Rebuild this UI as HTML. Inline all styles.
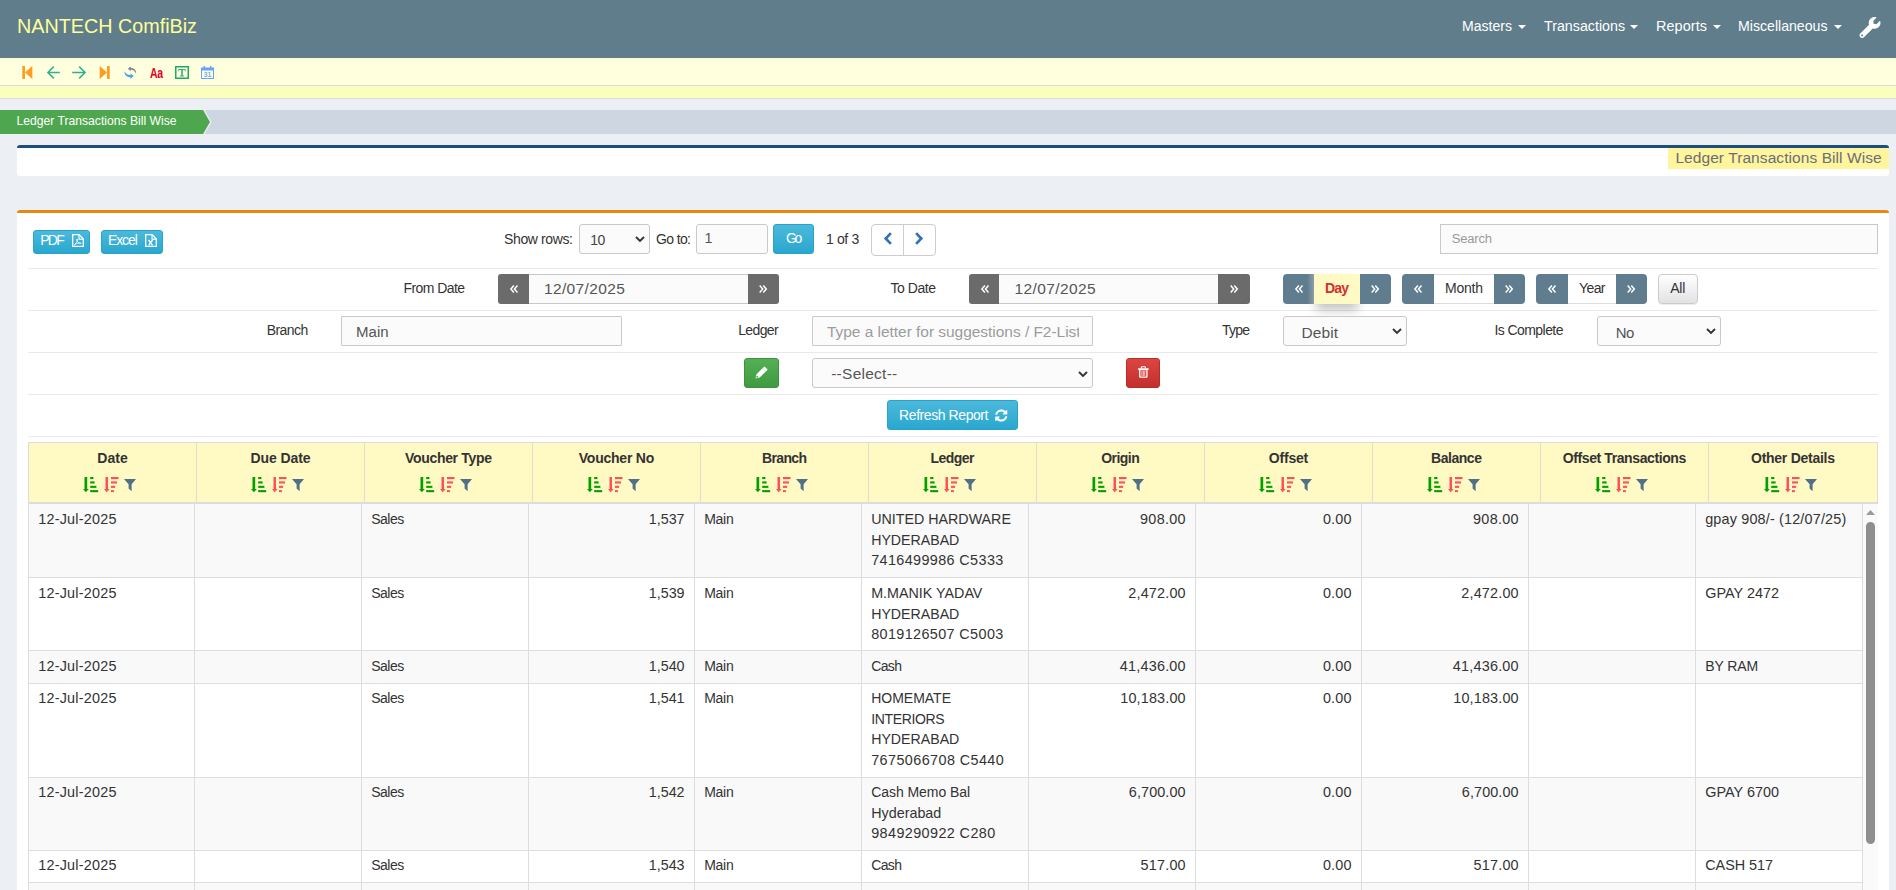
<!DOCTYPE html><html><head><meta charset="utf-8"><title>Ledger Transactions Bill Wise</title><style>
*{box-sizing:border-box}
html,body{margin:0;padding:0}
body{width:1896px;height:890px;overflow:hidden;position:relative;background:#ECEFF4;font-family:'Liberation Sans',sans-serif;font-size:14.4px;color:#333}
.t{position:absolute;white-space:pre;line-height:20px}
.abs{position:absolute}
svg{position:absolute;overflow:visible}
.inp{position:absolute;background:#FBFBFB;border:1px solid #C9C9C9;border-radius:1px}
.sep{position:absolute;left:28px;width:1850px;height:1px;background:#E9E9E9}
.bi{position:absolute;border-radius:3px;border:1px solid #28A4C9;background:linear-gradient(#4BB9DC,#2AA7CF)}
.dk{position:absolute;background:#6B6B6B}
.bg{position:absolute;background:#5F7D8E}
</style></head><body><div style="position:absolute;left:0px;top:0px;width:1896px;height:58px;background:#607D8B"></div><span class="t" style="left:17.00px;top:16.00px;font-size:19.75px;color:#FFFF99;">NANTECH ComfiBiz</span><span class="t" style="left:1462.00px;top:16.00px;font-size:14.07px;color:#fff;">Masters</span><svg style="left:1518px;top:25px" width="8" height="4" viewBox="0 0 8 4" ><polygon points="0,0 8,0 4,4" fill="#fff"/></svg><span class="t" style="left:1544.00px;top:16.00px;font-size:14.25px;color:#fff;">Transactions</span><svg style="left:1630px;top:25px" width="8" height="4" viewBox="0 0 8 4" ><polygon points="0,0 8,0 4,4" fill="#fff"/></svg><span class="t" style="left:1656.00px;top:16.00px;font-size:14.4px;color:#fff;letter-spacing:0.102px;">Reports</span><svg style="left:1713px;top:25px" width="8" height="4" viewBox="0 0 8 4" ><polygon points="0,0 8,0 4,4" fill="#fff"/></svg><span class="t" style="left:1738.00px;top:16.00px;font-size:14.13px;color:#fff;">Miscellaneous</span><svg style="left:1833.5px;top:25px" width="8" height="4" viewBox="0 0 8 4" ><polygon points="0,0 8,0 4,4" fill="#fff"/></svg><svg style="left:1859px;top:17px" width="22" height="21" viewBox="0 0 512 512" ><path d="M507.73 109.1c-2.24-9.03-13.54-12.09-20.12-5.51l-74.36 74.36-67.88-11.31-11.31-67.88 74.36-74.36c6.62-6.62 3.43-17.9-5.66-20.16-47.38-11.74-99.55.91-136.58 37.93-39.64 39.64-50.55 97.1-34.05 147.2L18.74 402.76c-24.99 24.99-24.99 65.51 0 90.5 24.99 24.99 65.51 24.99 90.5 0l213.21-213.21c50.12 16.71 107.47 5.68 147.37-34.22 37.07-37.07 49.7-89.32 37.91-136.73zM64 472c-13.25 0-24-10.75-24-24 0-13.26 10.75-24 24-24s24 10.74 24 24c0 13.25-10.75 24-24 24z" fill="#fff"/></svg><div style="position:absolute;left:0px;top:58px;width:1896px;height:27px;background:linear-gradient(#F6F8D8 0,#FFFFDE 4px,#FFFFDE 100%)"></div><div style="position:absolute;left:0px;top:85px;width:1896px;height:1px;background:#DCDCD4"></div><div style="position:absolute;left:0px;top:86px;width:1896px;height:12px;background:#FAFEBE"></div><div style="position:absolute;left:0px;top:98px;width:1896px;height:1px;background:#DDDDD8"></div><svg style="left:22px;top:66px" width="11" height="13" viewBox="0 0 11 13" ><rect x="0.3" y="0" width="2.7" height="13" fill="#FF9A22"/><polygon points="10.3,0 10.3,13 3,6.5" fill="#FF9A22"/></svg><svg style="left:47px;top:66px" width="13" height="13" viewBox="0 0 13 13" ><path d="M12.8 6.5H1M6.8 0.6L0.9 6.5l5.9 5.9" fill="none" stroke="#2FAF93" stroke-width="1.5"/></svg><svg style="left:72px;top:66px" width="14" height="13" viewBox="0 0 14 13" ><path d="M0.2 6.5H13M7.2 0.6l5.9 5.9l-5.9 5.9" fill="none" stroke="#2FAF93" stroke-width="1.5"/></svg><svg style="left:99px;top:66px" width="11" height="13" viewBox="0 0 11 13" ><rect x="8" y="0" width="2.7" height="13" fill="#FF9A22"/><polygon points="0.7,0 0.7,13 8,6.5" fill="#FF9A22"/></svg><svg style="left:123.5px;top:65.5px" width="14" height="14" viewBox="0 0 14 14" ><path d="M6.2 0.4L3.9 3l3 1.9 0-1.4c2.6 0.3 4.3 1.9 5.2 4.6 0.4-3.6-1.7-6.1-5.2-6.3z" fill="#7D8896"/><path d="M0.5 5.2c-0.3 3.6 2.2 6 5.9 6.1l0 1.8 3.4-3-3.4-2.6 0 1.6C3.6 8.9 1.600 7.6 0.5 5.2z" fill="#4EA4F0"/></svg><span class="t" style="left:149.8px;top:62.8px;font-size:14.6px;font-weight:700;color:#E0002A;transform:scaleX(0.72);transform-origin:0 0;letter-spacing:-0.3px">Aa</span><svg style="left:175px;top:66px" width="14" height="13" viewBox="0 0 14 13" ><rect x="0.75" y="0.75" width="12.5" height="11.5" fill="none" stroke="#1FA866" stroke-width="1.5"/><path d="M3.3 3h7.4v2.2h-0.9v-1.1H7.8v5.3h1.3v1H4.9v-1h1.3V4.100H4.200v1.100H3.300z" fill="#36AE78"/></svg><svg style="left:201px;top:66px" width="13" height="13" viewBox="0 0 13 13" ><rect x="0.5" y="2.200" width="12" height="10.3" fill="none" stroke="#66A3FF" stroke-width="1"/><rect x="0" y="1.700" width="13" height="2.800" fill="#66A3FF"/><rect x="2.600" y="0" width="1.500" height="2.600" fill="#66A3FF"/><rect x="8.900" y="0" width="1.500" height="2.600" fill="#66A3FF"/><text x="6.500" y="11" font-size="6.800" font-weight="700" fill="#6FA8FF" text-anchor="middle" font-family="Liberation Sans">31</text></svg><div style="position:absolute;left:0px;top:110px;width:1896px;height:24px;background:#CED6E2"></div><svg style="left:0px;top:110px" width="214" height="24" viewBox="0 0 214 24" ><polygon points="0,0 203,0 210,12 203,24 0,24" fill="#4EA74E"/><path d="M203.8 -0.5L210.900 12 203.800 24.500" fill="none" stroke="#E9EEF0" stroke-width="1.200"/></svg><span class="t" style="left:16.50px;top:111.00px;font-size:12.16px;color:#fff;letter-spacing:-0.005px;">Ledger Transactions Bill Wise</span><div style="position:absolute;left:17px;top:145px;width:1872px;height:31px;background:#fff;border-top:3px solid #1E4D80;border-radius:3px"></div><div style="position:absolute;left:1668px;top:148px;width:221px;height:21px;background:#FFF59D"></div><span class="t" style="left:1675.40px;top:148.00px;font-size:15.5px;color:#6A6E78;letter-spacing:0.076px;">Ledger Transactions Bill Wise</span><div style="position:absolute;left:17px;top:210px;width:1872px;height:700px;background:#fff;border-top:3px solid #E68A0F;border-radius:3px"></div><div class="sep" style="top:268px"></div><div class="sep" style="top:310px"></div><div class="sep" style="top:352px"></div><div class="sep" style="top:394px"></div><div class="sep" style="top:436px"></div><div class="bi" style="left:33px;top:230px;width:57px;height:24px"></div><span class="t" style="left:40.30px;top:230.00px;font-size:14.0px;color:#fff;letter-spacing:-1.800px;">PDF</span><svg style="left:72px;top:234px" width="12" height="13" viewBox="0 0 12 13" ><path d="M0.700 0.700h6.400l4.200 4.200v7.400h-10.600z" fill="none" stroke="#fff" stroke-width="1.300"/><path d="M7 0.900v4.200h4.200" fill="none" stroke="#fff" stroke-width="1.100"/><path d="M2.400 10.800c1.500-0.800 2.700-3 3-5.300 0.100-0.900-0.800-0.900-0.700 0 0.300 2 1.700 3.600 3.900 4.100 0.900 0.200 0.800-0.700 0-0.700-2.100 0-4.500 0.800-6.200 1.900z" fill="none" stroke="#fff" stroke-width="0.800"/></svg><div class="bi" style="left:101px;top:230px;width:62px;height:24px"></div><span class="t" style="left:107.90px;top:230.00px;font-size:14.0px;color:#fff;letter-spacing:-1.084px;">Excel</span><svg style="left:145px;top:234px" width="12" height="13" viewBox="0 0 12 13" ><path d="M0.700 0.700h6.400l4.200 4.200v7.400h-10.600z" fill="none" stroke="#fff" stroke-width="1.300"/><path d="M7 0.900v4.200h4.200" fill="none" stroke="#fff" stroke-width="1.100"/><path d="M3.600 6l4 5.300M7.600 6l-4 5.300" fill="none" stroke="#fff" stroke-width="1.400"/></svg><span class="t" style="left:504.00px;top:229.00px;font-size:14.0px;color:#333;letter-spacing:-0.373px;">Show rows:</span><div class="inp" style="left:579px;top:224px;width:71px;height:30px;border-radius:3px"></div><span class="t" style="left:590.20px;top:230.00px;font-size:14.0px;color:#444;letter-spacing:-0.578px;">10</span><svg style="left:634.5px;top:235.5px" width="10" height="6" viewBox="0 0 10 6" ><path d="M1 1l4 4 4-4" fill="none" stroke="#333" stroke-width="1.9"/></svg><span class="t" style="left:656.00px;top:229.00px;font-size:14.0px;color:#333;letter-spacing:-0.628px;">Go to:</span><div class="inp" style="left:696px;top:224px;width:72px;height:30px;border-radius:3px"></div><span class="t" style="left:704.50px;top:228.00px;font-size:14.4px;color:#555;">1</span><div class="bi" style="left:773px;top:224px;width:41px;height:30px"></div><span class="t" style="left:786.00px;top:228.00px;font-size:14.0px;color:#fff;letter-spacing:-2.488px;">Go</span><span class="t" style="left:826.00px;top:229.00px;font-size:14.0px;color:#333;letter-spacing:-0.366px;">1 of 3</span><div style="position:absolute;left:871px;top:224px;width:65px;height:32px;background:#fff;border:1px solid #CDCDCD;border-radius:4px"></div><div style="position:absolute;left:903px;top:224px;width:1px;height:32px;background:#CDCDCD"></div><svg style="left:884px;top:232.4px" width="8" height="13" viewBox="0 0 8 13" ><path d="M6.900 1.100L1.700 6.500l5.200 5.400" fill="none" stroke="#2F73B5" stroke-width="2.700"/></svg><svg style="left:915.3px;top:232.4px" width="8" height="13" viewBox="0 0 8 13" ><path d="M1.100 1.100L6.300 6.500l-5.200 5.400" fill="none" stroke="#2F73B5" stroke-width="2.700"/></svg><div class="inp" style="left:1440px;top:224px;width:438px;height:30px;border-radius:0"></div><span class="t" style="left:1451.80px;top:229.00px;font-size:13.03px;color:#999;letter-spacing:-0.210px;">Search</span><span class="t" style="left:403.40px;top:278.00px;font-size:14.0px;color:#333;letter-spacing:-0.553px;">From Date</span><div class="inp" style="left:527px;top:274px;width:223px;height:30px;border-radius:0;border-color:#C8C8C8"></div><div class="dk" style="left:498px;top:274px;width:31px;height:30px;border-radius:3px 0 0 3px"></div><div class="dk" style="left:748px;top:274px;width:31px;height:30px;border-radius:0 3px 3px 0"></div><svg style="left:510.0px;top:284.9px" width="8.2" height="8.0" viewBox="0 0 8.2 8" ><path d="M3.900 0.600L0.900 4l3 3.400M7.500 0.600L4.500 4l3 3.400" fill="none" stroke="#fff" stroke-width="1.500"/></svg><svg style="left:759.1999999999999px;top:284.9px" width="8.2" height="8.0" viewBox="0 0 8.2 8" ><path d="M0.700 0.600L3.700 4l-3 3.400M4.300 0.600L7.300 4l-3 3.400" fill="none" stroke="#fff" stroke-width="1.500"/></svg><span class="t" style="left:543.90px;top:279.00px;font-size:15.5px;color:#555;letter-spacing:0.380px;">12/07/2025</span><span class="t" style="left:890.60px;top:278.00px;font-size:14.0px;color:#333;letter-spacing:-0.475px;">To Date</span><div class="inp" style="left:997px;top:274px;width:223px;height:30px;border-radius:0;border-color:#C8C8C8"></div><div class="dk" style="left:969px;top:274px;width:30px;height:30px;border-radius:3px 0 0 3px"></div><div class="dk" style="left:1218px;top:274px;width:32px;height:30px;border-radius:0 3px 3px 0"></div><svg style="left:980.5px;top:284.9px" width="8.2" height="8.0" viewBox="0 0 8.2 8" ><path d="M3.900 0.600L0.900 4l3 3.400M7.500 0.600L4.500 4l3 3.400" fill="none" stroke="#fff" stroke-width="1.500"/></svg><svg style="left:1229.7px;top:284.9px" width="8.2" height="8.0" viewBox="0 0 8.2 8" ><path d="M0.700 0.600L3.700 4l-3 3.400M4.300 0.600L7.300 4l-3 3.400" fill="none" stroke="#fff" stroke-width="1.500"/></svg><span class="t" style="left:1014.60px;top:279.00px;font-size:15.5px;color:#555;letter-spacing:0.380px;">12/07/2025</span><div class="bg" style="left:1283px;top:274px;width:31px;height:30px;border-radius:4px 0 0 4px"></div><div style="position:absolute;left:1314px;top:274px;width:46px;height:30px;background:#FFF9C4;box-shadow:0 8px 11px -2px rgba(0,0,0,0.24)"></div><div style="position:absolute;left:1307px;top:274px;width:7px;height:30px;background:linear-gradient(to right,rgba(150,165,178,0),rgba(150,165,178,0.85))"></div><div class="bg" style="left:1360px;top:274px;width:31px;height:30px;border-radius:0 4px 4px 0"></div><svg style="left:1294.8000000000002px;top:284.8px" width="8.2" height="8.0" viewBox="0 0 8.2 8" ><path d="M3.900 0.600L0.900 4l3 3.400M7.500 0.600L4.500 4l3 3.400" fill="none" stroke="#fff" stroke-width="1.500"/></svg><svg style="left:1371.2px;top:284.8px" width="8.2" height="8.0" viewBox="0 0 8.2 8" ><path d="M0.700 0.600L3.700 4l-3 3.400M4.300 0.600L7.300 4l-3 3.400" fill="none" stroke="#fff" stroke-width="1.500"/></svg><span class="t" style="left:1325.00px;top:278.00px;font-size:14.0px;color:#D32F2F;font-weight:700;letter-spacing:-0.844px;">Day</span><div class="bg" style="left:1402px;top:274px;width:32px;height:30px;border-radius:4px 0 0 4px"></div><div style="position:absolute;left:1434px;top:274px;width:60px;height:30px;background:#fff;border-top:1px solid #DDD;border-bottom:1px solid #DDD"></div><div class="bg" style="left:1494px;top:274px;width:31px;height:30px;border-radius:0 4px 4px 0"></div><svg style="left:1414.3000000000002px;top:284.8px" width="8.2" height="8.0" viewBox="0 0 8.2 8" ><path d="M3.900 0.600L0.900 4l3 3.400M7.500 0.600L4.500 4l3 3.400" fill="none" stroke="#fff" stroke-width="1.500"/></svg><svg style="left:1505.2px;top:284.8px" width="8.2" height="8.0" viewBox="0 0 8.2 8" ><path d="M0.700 0.600L3.700 4l-3 3.400M4.300 0.600L7.300 4l-3 3.400" fill="none" stroke="#fff" stroke-width="1.500"/></svg><span class="t" style="left:1445.00px;top:278.00px;font-size:14.0px;color:#333;letter-spacing:-0.230px;">Month</span><div class="bg" style="left:1536px;top:274px;width:32px;height:30px;border-radius:4px 0 0 4px"></div><div style="position:absolute;left:1568px;top:274px;width:48px;height:30px;background:#fff;border-top:1px solid #DDD;border-bottom:1px solid #DDD"></div><div class="bg" style="left:1616px;top:274px;width:31px;height:30px;border-radius:0 4px 4px 0"></div><svg style="left:1548.3000000000002px;top:284.8px" width="8.2" height="8.0" viewBox="0 0 8.2 8" ><path d="M3.900 0.600L0.900 4l3 3.400M7.500 0.600L4.500 4l3 3.400" fill="none" stroke="#fff" stroke-width="1.500"/></svg><svg style="left:1627.2px;top:284.8px" width="8.2" height="8.0" viewBox="0 0 8.2 8" ><path d="M0.700 0.600L3.700 4l-3 3.400M4.300 0.600L7.300 4l-3 3.400" fill="none" stroke="#fff" stroke-width="1.500"/></svg><span class="t" style="left:1579.00px;top:278.00px;font-size:14.0px;color:#333;letter-spacing:-0.599px;">Year</span><div style="position:absolute;left:1658px;top:274px;width:39.5px;height:30px;background:linear-gradient(#fff,#E2E2E2);border:1px solid #CCC;border-radius:4px;box-shadow:0 1px 1px rgba(0,0,0,0.08)"></div><span class="t" style="left:1670.30px;top:278.00px;font-size:14.0px;color:#333;letter-spacing:-0.281px;">All</span><span class="t" style="left:266.70px;top:320.00px;font-size:14.0px;color:#333;letter-spacing:-0.572px;">Branch</span><div class="inp" style="left:341px;top:316px;width:281px;height:30px"></div><span class="t" style="left:356.10px;top:322.00px;font-size:15.03px;color:#555;letter-spacing:0.018px;">Main</span><span class="t" style="left:738.20px;top:320.00px;font-size:14.0px;color:#333;letter-spacing:-0.619px;">Ledger</span><div class="inp" style="left:812px;top:316px;width:281px;height:30px"></div><div style="position:absolute;left:826px;top:318px;width:253px;height:26px;overflow:hidden"><span class="t" style="left:1px;top:4px;font-size:15.5px;color:#9C9C9C;letter-spacing:-0.038px">Type a letter for suggestions / F2-List</span></div><span class="t" style="left:1222.00px;top:320.00px;font-size:14.0px;color:#333;letter-spacing:-0.786px;">Type</span><div class="inp" style="left:1283px;top:316px;width:124px;height:30px;border-radius:3px"></div><span class="t" style="left:1301.50px;top:323.00px;font-size:15.5px;color:#555;letter-spacing:0.078px;">Debit</span><svg style="left:1392px;top:328px" width="10" height="6" viewBox="0 0 10 6" ><path d="M1 1l4 4 4-4" fill="none" stroke="#333" stroke-width="1.9"/></svg><span class="t" style="left:1494.40px;top:320.00px;font-size:14.0px;color:#333;letter-spacing:-0.560px;">Is Complete</span><div class="inp" style="left:1597px;top:316px;width:124px;height:30px;border-radius:3px"></div><span class="t" style="left:1615.70px;top:323.00px;font-size:14.96px;color:#555;letter-spacing:-0.425px;">No</span><svg style="left:1705.5px;top:328px" width="10" height="6" viewBox="0 0 10 6" ><path d="M1 1l4 4 4-4" fill="none" stroke="#333" stroke-width="1.9"/></svg><div style="position:absolute;left:744px;top:358px;width:35px;height:30px;background:linear-gradient(#55B055,#3F9B3F);border:1px solid #3E8F3E;border-radius:3px"></div><svg style="left:754.7px;top:366px" width="13" height="13" viewBox="0 0 13 13" ><g transform="rotate(45 6.500 6.500)"><rect x="4.200" y="0" width="4.600" height="11.400" rx="0.500" fill="#fff"/><polygon points="4.200,11.300 8.800,11.300 6.500,15" fill="#fff"/><rect x="4.200" y="2.300" width="4.600" height="0.500" fill="#8CCB8C"/><circle cx="6.500" cy="12.700" r="0.750" fill="#3F7F5F"/></g></svg><div class="inp" style="left:812px;top:358px;width:281px;height:30px;border-radius:3px"></div><span class="t" style="left:831.20px;top:364.00px;font-size:15.5px;color:#555;letter-spacing:0.263px;">--Select--</span><svg style="left:1078px;top:370.5px" width="10" height="6" viewBox="0 0 10 6" ><path d="M1 1l4 4 4-4" fill="none" stroke="#333" stroke-width="1.9"/></svg><div style="position:absolute;left:1126px;top:358px;width:34px;height:30px;background:linear-gradient(#DA4743,#C3302C);border:1px solid #B92C28;border-radius:3px"></div><svg style="left:1137.7px;top:366.4px" width="10.7" height="11.7" viewBox="0 0 10.7 11.7" ><path d="M0 2.300h10.700v1.500H0z" fill="#fff"/><path d="M3.300 2.400v-0.900c0-0.500 0.300-0.800 0.800-0.800h2.500c0.500 0 0.800 0.300 0.800 0.800v0.900" fill="none" stroke="#fff" stroke-width="1.100"/><rect x="1.750" y="3.700" width="7.200" height="7.350" rx="0.600" fill="none" stroke="#fff" stroke-width="1.300"/><path d="M3.900 4.800v5.200M5.350 4.800v5.200M6.800 4.800v5.200" stroke="#FFEDE0" stroke-width="0.800"/></svg><div class="bi" style="left:887px;top:400px;width:131px;height:30px"></div><span class="t" style="left:899.10px;top:405.00px;font-size:14.0px;color:#fff;letter-spacing:-0.426px;">Refresh Report</span><svg style="left:994.8px;top:408.5px" width="12.5" height="13" viewBox="0 0 512 512" ><path d="M370.720 133.280C339.460 104.010 298.890 87.960 255.850 88c-77.460.070-144.330 53.180-162.790 126.850-1.340 5.360-6.120 9.150-11.650 9.150H24.100c-7.500 0-13.190-6.810-11.810-14.180C33.930 94.920 134.810 8 256 8c66.450 0 126.790 26.140 171.310 68.690L463.030 40.970C478.150 25.850 504 36.560 504 57.940V192c0 13.250-10.750 24-24 24H345.940c-21.380 0-32.090-25.850-16.970-40.970l41.750-41.750zM32 296h134.060c21.380 0 32.090 25.850 16.970 40.970l-41.750 41.750c31.260 29.270 71.840 45.320 114.880 45.280 77.420-.070 144.310-53.140 162.780-126.850 1.340-5.360 6.120-9.150 11.650-9.150h57.300c7.500 0 13.190 6.810 11.810 14.180C478.070 417.080 377.190 504 256 504c-66.450 0-126.790-26.140-171.310-68.690l-35.720 35.720C33.850 486.150 8 475.440 8 454.060V320c0-13.250 10.750-24 24-24z" fill="#fff"/></svg><div style="position:absolute;left:28px;top:442px;width:1850px;height:60px;background:#FFF9C4"></div><div style="position:absolute;left:28px;top:442px;width:1850px;height:1px;background:#DDD"></div><div style="position:absolute;left:28px;top:502px;width:1850px;height:2.5px;background:#DCDCDC"></div><div style="position:absolute;left:28px;top:442px;width:1px;height:60px;background:#DDDDD0"></div><div style="position:absolute;left:196px;top:442px;width:1px;height:60px;background:#DDDDD0"></div><div style="position:absolute;left:364px;top:442px;width:1px;height:60px;background:#DDDDD0"></div><div style="position:absolute;left:532px;top:442px;width:1px;height:60px;background:#DDDDD0"></div><div style="position:absolute;left:700px;top:442px;width:1px;height:60px;background:#DDDDD0"></div><div style="position:absolute;left:868px;top:442px;width:1px;height:60px;background:#DDDDD0"></div><div style="position:absolute;left:1036px;top:442px;width:1px;height:60px;background:#DDDDD0"></div><div style="position:absolute;left:1204px;top:442px;width:1px;height:60px;background:#DDDDD0"></div><div style="position:absolute;left:1372px;top:442px;width:1px;height:60px;background:#DDDDD0"></div><div style="position:absolute;left:1540px;top:442px;width:1px;height:60px;background:#DDDDD0"></div><div style="position:absolute;left:1708px;top:442px;width:1px;height:60px;background:#DDDDD0"></div><div style="position:absolute;left:1877px;top:442px;width:1px;height:60px;background:#DDDDD0"></div><span class="t" style="left:97.30px;top:448.00px;font-size:14.03px;color:#333;font-weight:700;">Date</span><svg style="left:83.0px;top:477px" width="16" height="15.5" viewBox="0 0 16 15.5" ><rect x="1.500" y="0" width="2.700" height="12.500" fill="#00A000"/><polygon points="0,12 5.800,12 2.900,15.300" fill="#00A000"/><rect x="7.200" y="0" width="3.200" height="2.100" fill="#00A000"/><rect x="7.200" y="4.400" width="4.400" height="2.100" fill="#00A000"/><rect x="7.200" y="8.800" width="6.200" height="2.100" fill="#00A000"/><rect x="7.200" y="13.100" width="8" height="2.100" fill="#00A000"/></svg><svg style="left:104.4px;top:477px" width="16" height="15.5" viewBox="0 0 16 15.5" ><rect x="1.500" y="0" width="2.500" height="12.500" fill="#FF4F5B"/><polygon points="0,12 5.600,12 2.800,15.300" fill="#FF4F5B"/><rect x="7" y="0" width="7.500" height="2.100" fill="#FF4F5B"/><rect x="7" y="4.400" width="6" height="2.100" fill="#FF4F5B"/><rect x="7" y="8.800" width="4.100" height="2.100" fill="#FF4F5B"/><rect x="7" y="13.100" width="2.900" height="2.100" fill="#FF4F5B"/></svg><svg style="left:124.4px;top:479px" width="12" height="12.5" viewBox="0 0 12 12.5" ><polygon points="0,0 12,0 7.600,5.200 7.600,12.300 4.600,9.600 4.600,5.200" fill="#4F6F8B"/></svg><span class="t" style="left:250.50px;top:448.00px;font-size:14.0px;color:#333;font-weight:700;letter-spacing:-0.098px;">Due Date</span><svg style="left:251.0px;top:477px" width="16" height="15.5" viewBox="0 0 16 15.5" ><rect x="1.500" y="0" width="2.700" height="12.500" fill="#00A000"/><polygon points="0,12 5.800,12 2.900,15.300" fill="#00A000"/><rect x="7.200" y="0" width="3.200" height="2.100" fill="#00A000"/><rect x="7.200" y="4.400" width="4.400" height="2.100" fill="#00A000"/><rect x="7.200" y="8.800" width="6.200" height="2.100" fill="#00A000"/><rect x="7.200" y="13.100" width="8" height="2.100" fill="#00A000"/></svg><svg style="left:272.4px;top:477px" width="16" height="15.5" viewBox="0 0 16 15.5" ><rect x="1.500" y="0" width="2.500" height="12.500" fill="#FF4F5B"/><polygon points="0,12 5.600,12 2.800,15.300" fill="#FF4F5B"/><rect x="7" y="0" width="7.500" height="2.100" fill="#FF4F5B"/><rect x="7" y="4.400" width="6" height="2.100" fill="#FF4F5B"/><rect x="7" y="8.800" width="4.100" height="2.100" fill="#FF4F5B"/><rect x="7" y="13.100" width="2.900" height="2.100" fill="#FF4F5B"/></svg><svg style="left:292.4px;top:479px" width="12" height="12.5" viewBox="0 0 12 12.5" ><polygon points="0,0 12,0 7.600,5.200 7.600,12.300 4.600,9.600 4.600,5.200" fill="#4F6F8B"/></svg><span class="t" style="left:405.00px;top:448.00px;font-size:14.0px;color:#333;font-weight:700;letter-spacing:-0.320px;">Voucher Type</span><svg style="left:419.0px;top:477px" width="16" height="15.5" viewBox="0 0 16 15.5" ><rect x="1.500" y="0" width="2.700" height="12.500" fill="#00A000"/><polygon points="0,12 5.800,12 2.900,15.300" fill="#00A000"/><rect x="7.200" y="0" width="3.200" height="2.100" fill="#00A000"/><rect x="7.200" y="4.400" width="4.400" height="2.100" fill="#00A000"/><rect x="7.200" y="8.800" width="6.200" height="2.100" fill="#00A000"/><rect x="7.200" y="13.100" width="8" height="2.100" fill="#00A000"/></svg><svg style="left:440.4px;top:477px" width="16" height="15.5" viewBox="0 0 16 15.5" ><rect x="1.500" y="0" width="2.500" height="12.500" fill="#FF4F5B"/><polygon points="0,12 5.600,12 2.800,15.300" fill="#FF4F5B"/><rect x="7" y="0" width="7.500" height="2.100" fill="#FF4F5B"/><rect x="7" y="4.400" width="6" height="2.100" fill="#FF4F5B"/><rect x="7" y="8.800" width="4.100" height="2.100" fill="#FF4F5B"/><rect x="7" y="13.100" width="2.900" height="2.100" fill="#FF4F5B"/></svg><svg style="left:460.4px;top:479px" width="12" height="12.5" viewBox="0 0 12 12.5" ><polygon points="0,0 12,0 7.600,5.200 7.600,12.300 4.600,9.600 4.600,5.200" fill="#4F6F8B"/></svg><span class="t" style="left:578.75px;top:448.00px;font-size:14.0px;color:#333;font-weight:700;letter-spacing:-0.226px;">Voucher No</span><svg style="left:587.0px;top:477px" width="16" height="15.5" viewBox="0 0 16 15.5" ><rect x="1.500" y="0" width="2.700" height="12.500" fill="#00A000"/><polygon points="0,12 5.800,12 2.900,15.300" fill="#00A000"/><rect x="7.200" y="0" width="3.200" height="2.100" fill="#00A000"/><rect x="7.200" y="4.400" width="4.400" height="2.100" fill="#00A000"/><rect x="7.200" y="8.800" width="6.200" height="2.100" fill="#00A000"/><rect x="7.200" y="13.100" width="8" height="2.100" fill="#00A000"/></svg><svg style="left:608.4px;top:477px" width="16" height="15.5" viewBox="0 0 16 15.5" ><rect x="1.500" y="0" width="2.500" height="12.500" fill="#FF4F5B"/><polygon points="0,12 5.600,12 2.800,15.300" fill="#FF4F5B"/><rect x="7" y="0" width="7.500" height="2.100" fill="#FF4F5B"/><rect x="7" y="4.400" width="6" height="2.100" fill="#FF4F5B"/><rect x="7" y="8.800" width="4.100" height="2.100" fill="#FF4F5B"/><rect x="7" y="13.100" width="2.900" height="2.100" fill="#FF4F5B"/></svg><svg style="left:628.4px;top:479px" width="12" height="12.5" viewBox="0 0 12 12.5" ><polygon points="0,0 12,0 7.600,5.200 7.600,12.300 4.600,9.600 4.600,5.200" fill="#4F6F8B"/></svg><span class="t" style="left:762.00px;top:448.00px;font-size:14.0px;color:#333;font-weight:700;letter-spacing:-0.647px;">Branch</span><svg style="left:755.0px;top:477px" width="16" height="15.5" viewBox="0 0 16 15.5" ><rect x="1.500" y="0" width="2.700" height="12.500" fill="#00A000"/><polygon points="0,12 5.800,12 2.900,15.300" fill="#00A000"/><rect x="7.200" y="0" width="3.200" height="2.100" fill="#00A000"/><rect x="7.200" y="4.400" width="4.400" height="2.100" fill="#00A000"/><rect x="7.200" y="8.800" width="6.200" height="2.100" fill="#00A000"/><rect x="7.200" y="13.100" width="8" height="2.100" fill="#00A000"/></svg><svg style="left:776.4px;top:477px" width="16" height="15.5" viewBox="0 0 16 15.5" ><rect x="1.500" y="0" width="2.500" height="12.500" fill="#FF4F5B"/><polygon points="0,12 5.600,12 2.800,15.300" fill="#FF4F5B"/><rect x="7" y="0" width="7.500" height="2.100" fill="#FF4F5B"/><rect x="7" y="4.400" width="6" height="2.100" fill="#FF4F5B"/><rect x="7" y="8.800" width="4.100" height="2.100" fill="#FF4F5B"/><rect x="7" y="13.100" width="2.900" height="2.100" fill="#FF4F5B"/></svg><svg style="left:796.4px;top:479px" width="12" height="12.5" viewBox="0 0 12 12.5" ><polygon points="0,0 12,0 7.600,5.200 7.600,12.300 4.600,9.600 4.600,5.200" fill="#4F6F8B"/></svg><span class="t" style="left:930.50px;top:448.00px;font-size:14.0px;color:#333;font-weight:700;letter-spacing:-0.537px;">Ledger</span><svg style="left:923.0px;top:477px" width="16" height="15.5" viewBox="0 0 16 15.5" ><rect x="1.500" y="0" width="2.700" height="12.500" fill="#00A000"/><polygon points="0,12 5.800,12 2.900,15.300" fill="#00A000"/><rect x="7.200" y="0" width="3.200" height="2.100" fill="#00A000"/><rect x="7.200" y="4.400" width="4.400" height="2.100" fill="#00A000"/><rect x="7.200" y="8.800" width="6.200" height="2.100" fill="#00A000"/><rect x="7.200" y="13.100" width="8" height="2.100" fill="#00A000"/></svg><svg style="left:944.4px;top:477px" width="16" height="15.5" viewBox="0 0 16 15.5" ><rect x="1.500" y="0" width="2.500" height="12.500" fill="#FF4F5B"/><polygon points="0,12 5.600,12 2.800,15.300" fill="#FF4F5B"/><rect x="7" y="0" width="7.500" height="2.100" fill="#FF4F5B"/><rect x="7" y="4.400" width="6" height="2.100" fill="#FF4F5B"/><rect x="7" y="8.800" width="4.100" height="2.100" fill="#FF4F5B"/><rect x="7" y="13.100" width="2.900" height="2.100" fill="#FF4F5B"/></svg><svg style="left:964.4px;top:479px" width="12" height="12.5" viewBox="0 0 12 12.5" ><polygon points="0,0 12,0 7.600,5.200 7.600,12.300 4.600,9.600 4.600,5.200" fill="#4F6F8B"/></svg><span class="t" style="left:1101.25px;top:448.00px;font-size:14.0px;color:#333;font-weight:700;letter-spacing:-0.547px;">Origin</span><svg style="left:1091.0px;top:477px" width="16" height="15.5" viewBox="0 0 16 15.5" ><rect x="1.500" y="0" width="2.700" height="12.500" fill="#00A000"/><polygon points="0,12 5.800,12 2.900,15.300" fill="#00A000"/><rect x="7.200" y="0" width="3.200" height="2.100" fill="#00A000"/><rect x="7.200" y="4.400" width="4.400" height="2.100" fill="#00A000"/><rect x="7.200" y="8.800" width="6.200" height="2.100" fill="#00A000"/><rect x="7.200" y="13.100" width="8" height="2.100" fill="#00A000"/></svg><svg style="left:1112.4px;top:477px" width="16" height="15.5" viewBox="0 0 16 15.5" ><rect x="1.500" y="0" width="2.500" height="12.500" fill="#FF4F5B"/><polygon points="0,12 5.600,12 2.800,15.300" fill="#FF4F5B"/><rect x="7" y="0" width="7.500" height="2.100" fill="#FF4F5B"/><rect x="7" y="4.400" width="6" height="2.100" fill="#FF4F5B"/><rect x="7" y="8.800" width="4.100" height="2.100" fill="#FF4F5B"/><rect x="7" y="13.100" width="2.900" height="2.100" fill="#FF4F5B"/></svg><svg style="left:1132.4px;top:479px" width="12" height="12.5" viewBox="0 0 12 12.5" ><polygon points="0,0 12,0 7.600,5.200 7.600,12.300 4.600,9.600 4.600,5.200" fill="#4F6F8B"/></svg><span class="t" style="left:1268.75px;top:448.00px;font-size:14.0px;color:#333;font-weight:700;letter-spacing:-0.191px;">Offset</span><svg style="left:1259.0px;top:477px" width="16" height="15.5" viewBox="0 0 16 15.5" ><rect x="1.500" y="0" width="2.700" height="12.500" fill="#00A000"/><polygon points="0,12 5.800,12 2.900,15.300" fill="#00A000"/><rect x="7.200" y="0" width="3.200" height="2.100" fill="#00A000"/><rect x="7.200" y="4.400" width="4.400" height="2.100" fill="#00A000"/><rect x="7.200" y="8.800" width="6.200" height="2.100" fill="#00A000"/><rect x="7.200" y="13.100" width="8" height="2.100" fill="#00A000"/></svg><svg style="left:1280.4px;top:477px" width="16" height="15.5" viewBox="0 0 16 15.5" ><rect x="1.500" y="0" width="2.500" height="12.500" fill="#FF4F5B"/><polygon points="0,12 5.600,12 2.800,15.300" fill="#FF4F5B"/><rect x="7" y="0" width="7.500" height="2.100" fill="#FF4F5B"/><rect x="7" y="4.400" width="6" height="2.100" fill="#FF4F5B"/><rect x="7" y="8.800" width="4.100" height="2.100" fill="#FF4F5B"/><rect x="7" y="13.100" width="2.900" height="2.100" fill="#FF4F5B"/></svg><svg style="left:1300.4px;top:479px" width="12" height="12.5" viewBox="0 0 12 12.5" ><polygon points="0,0 12,0 7.600,5.200 7.600,12.300 4.600,9.600 4.600,5.200" fill="#4F6F8B"/></svg><span class="t" style="left:1431.00px;top:448.00px;font-size:14.0px;color:#333;font-weight:700;letter-spacing:-0.451px;">Balance</span><svg style="left:1427.0px;top:477px" width="16" height="15.5" viewBox="0 0 16 15.5" ><rect x="1.500" y="0" width="2.700" height="12.500" fill="#00A000"/><polygon points="0,12 5.800,12 2.900,15.300" fill="#00A000"/><rect x="7.200" y="0" width="3.200" height="2.100" fill="#00A000"/><rect x="7.200" y="4.400" width="4.400" height="2.100" fill="#00A000"/><rect x="7.200" y="8.800" width="6.200" height="2.100" fill="#00A000"/><rect x="7.200" y="13.100" width="8" height="2.100" fill="#00A000"/></svg><svg style="left:1448.4px;top:477px" width="16" height="15.5" viewBox="0 0 16 15.5" ><rect x="1.500" y="0" width="2.500" height="12.500" fill="#FF4F5B"/><polygon points="0,12 5.600,12 2.800,15.300" fill="#FF4F5B"/><rect x="7" y="0" width="7.500" height="2.100" fill="#FF4F5B"/><rect x="7" y="4.400" width="6" height="2.100" fill="#FF4F5B"/><rect x="7" y="8.800" width="4.100" height="2.100" fill="#FF4F5B"/><rect x="7" y="13.100" width="2.900" height="2.100" fill="#FF4F5B"/></svg><svg style="left:1468.4px;top:479px" width="12" height="12.5" viewBox="0 0 12 12.5" ><polygon points="0,0 12,0 7.600,5.200 7.600,12.300 4.600,9.600 4.600,5.200" fill="#4F6F8B"/></svg><span class="t" style="left:1562.75px;top:448.00px;font-size:14.0px;color:#333;font-weight:700;letter-spacing:-0.400px;">Offset Transactions</span><svg style="left:1595.0px;top:477px" width="16" height="15.5" viewBox="0 0 16 15.5" ><rect x="1.500" y="0" width="2.700" height="12.500" fill="#00A000"/><polygon points="0,12 5.800,12 2.900,15.300" fill="#00A000"/><rect x="7.200" y="0" width="3.200" height="2.100" fill="#00A000"/><rect x="7.200" y="4.400" width="4.400" height="2.100" fill="#00A000"/><rect x="7.200" y="8.800" width="6.200" height="2.100" fill="#00A000"/><rect x="7.200" y="13.100" width="8" height="2.100" fill="#00A000"/></svg><svg style="left:1616.4px;top:477px" width="16" height="15.5" viewBox="0 0 16 15.5" ><rect x="1.500" y="0" width="2.500" height="12.500" fill="#FF4F5B"/><polygon points="0,12 5.600,12 2.800,15.300" fill="#FF4F5B"/><rect x="7" y="0" width="7.500" height="2.100" fill="#FF4F5B"/><rect x="7" y="4.400" width="6" height="2.100" fill="#FF4F5B"/><rect x="7" y="8.800" width="4.100" height="2.100" fill="#FF4F5B"/><rect x="7" y="13.100" width="2.900" height="2.100" fill="#FF4F5B"/></svg><svg style="left:1636.4px;top:479px" width="12" height="12.5" viewBox="0 0 12 12.5" ><polygon points="0,0 12,0 7.600,5.200 7.600,12.300 4.600,9.600 4.600,5.200" fill="#4F6F8B"/></svg><span class="t" style="left:1751.00px;top:448.00px;font-size:14.0px;color:#333;font-weight:700;letter-spacing:-0.262px;">Other Details</span><svg style="left:1763.5px;top:477px" width="16" height="15.5" viewBox="0 0 16 15.5" ><rect x="1.500" y="0" width="2.700" height="12.500" fill="#00A000"/><polygon points="0,12 5.800,12 2.900,15.300" fill="#00A000"/><rect x="7.200" y="0" width="3.200" height="2.100" fill="#00A000"/><rect x="7.200" y="4.400" width="4.400" height="2.100" fill="#00A000"/><rect x="7.200" y="8.800" width="6.200" height="2.100" fill="#00A000"/><rect x="7.200" y="13.100" width="8" height="2.100" fill="#00A000"/></svg><svg style="left:1784.9px;top:477px" width="16" height="15.5" viewBox="0 0 16 15.5" ><rect x="1.500" y="0" width="2.500" height="12.500" fill="#FF4F5B"/><polygon points="0,12 5.600,12 2.800,15.300" fill="#FF4F5B"/><rect x="7" y="0" width="7.500" height="2.100" fill="#FF4F5B"/><rect x="7" y="4.400" width="6" height="2.100" fill="#FF4F5B"/><rect x="7" y="8.800" width="4.100" height="2.100" fill="#FF4F5B"/><rect x="7" y="13.100" width="2.900" height="2.100" fill="#FF4F5B"/></svg><svg style="left:1804.9px;top:479px" width="12" height="12.5" viewBox="0 0 12 12.5" ><polygon points="0,0 12,0 7.600,5.200 7.600,12.300 4.600,9.600 4.600,5.200" fill="#4F6F8B"/></svg><div style="position:absolute;left:28px;top:504px;width:1835px;height:73px;background:#F9F9F9"></div><span class="t" style="left:38.20px;top:509.00px;font-size:14.4px;color:#333;letter-spacing:0.228px;">12-Jul-2025</span><span class="t" style="left:371.20px;top:509.00px;font-size:14.0px;color:#333;letter-spacing:-0.508px;">Sales</span><span class="t" style="left:648.80px;top:509.00px;font-size:14.31px;color:#333;">1,537</span><span class="t" style="left:704.20px;top:509.00px;font-size:14.0px;color:#333;letter-spacing:-0.286px;">Main</span><span class="t" style="left:871.20px;top:509.00px;font-size:14.27px;color:#333;">UNITED HARDWARE</span><span class="t" style="left:871.20px;top:530.00px;font-size:14.16px;color:#333;">HYDERABAD</span><span class="t" style="left:871.20px;top:550.00px;font-size:14.4px;color:#333;letter-spacing:0.376px;">7416499986 C5333</span><span class="t" style="left:1140.00px;top:509.00px;font-size:14.4px;color:#333;letter-spacing:0.317px;">908.00</span><span class="t" style="left:1322.90px;top:509.00px;font-size:14.4px;color:#333;letter-spacing:0.228px;">0.00</span><span class="t" style="left:1473.00px;top:509.00px;font-size:14.4px;color:#333;letter-spacing:0.317px;">908.00</span><span class="t" style="left:1705.20px;top:509.00px;font-size:14.4px;color:#333;letter-spacing:0.170px;">gpay 908/- (12/07/25)</span><div style="position:absolute;left:28px;top:577px;width:1835px;height:73px;background:#fff"></div><div style="position:absolute;left:28px;top:577px;width:1835px;height:1px;background:#DDD"></div><span class="t" style="left:38.20px;top:583.00px;font-size:14.4px;color:#333;letter-spacing:0.228px;">12-Jul-2025</span><span class="t" style="left:371.20px;top:583.00px;font-size:14.0px;color:#333;letter-spacing:-0.508px;">Sales</span><span class="t" style="left:648.80px;top:583.00px;font-size:14.31px;color:#333;">1,539</span><span class="t" style="left:704.20px;top:583.00px;font-size:14.0px;color:#333;letter-spacing:-0.286px;">Main</span><span class="t" style="left:871.20px;top:583.00px;font-size:14.3px;color:#333;">M.MANIK YADAV</span><span class="t" style="left:871.20px;top:604.00px;font-size:14.16px;color:#333;">HYDERABAD</span><span class="t" style="left:871.20px;top:624.00px;font-size:14.4px;color:#333;letter-spacing:0.376px;">8019126507 C5003</span><span class="t" style="left:1128.30px;top:583.00px;font-size:14.4px;color:#333;letter-spacing:0.181px;">2,472.00</span><span class="t" style="left:1322.90px;top:583.00px;font-size:14.4px;color:#333;letter-spacing:0.228px;">0.00</span><span class="t" style="left:1461.30px;top:583.00px;font-size:14.4px;color:#333;letter-spacing:0.181px;">2,472.00</span><span class="t" style="left:1705.20px;top:583.00px;font-size:14.4px;color:#333;letter-spacing:0.024px;">GPAY 2472</span><div style="position:absolute;left:28px;top:650px;width:1835px;height:33px;background:#F9F9F9"></div><div style="position:absolute;left:28px;top:650px;width:1835px;height:1px;background:#DDD"></div><span class="t" style="left:38.20px;top:656.00px;font-size:14.4px;color:#333;letter-spacing:0.228px;">12-Jul-2025</span><span class="t" style="left:371.20px;top:656.00px;font-size:14.0px;color:#333;letter-spacing:-0.508px;">Sales</span><span class="t" style="left:648.80px;top:656.00px;font-size:14.31px;color:#333;">1,540</span><span class="t" style="left:704.20px;top:656.00px;font-size:14.0px;color:#333;letter-spacing:-0.286px;">Main</span><span class="t" style="left:871.20px;top:656.00px;font-size:14.0px;color:#333;letter-spacing:-0.629px;">Cash</span><span class="t" style="left:1119.80px;top:656.00px;font-size:14.4px;color:#333;letter-spacing:0.221px;">41,436.00</span><span class="t" style="left:1322.90px;top:656.00px;font-size:14.4px;color:#333;letter-spacing:0.228px;">0.00</span><span class="t" style="left:1452.80px;top:656.00px;font-size:14.4px;color:#333;letter-spacing:0.221px;">41,436.00</span><span class="t" style="left:1705.20px;top:656.00px;font-size:14.0px;color:#333;letter-spacing:-0.087px;">BY RAM</span><div style="position:absolute;left:28px;top:683px;width:1835px;height:94px;background:#fff"></div><div style="position:absolute;left:28px;top:683px;width:1835px;height:1px;background:#DDD"></div><span class="t" style="left:38.20px;top:688.00px;font-size:14.4px;color:#333;letter-spacing:0.228px;">12-Jul-2025</span><span class="t" style="left:371.20px;top:688.00px;font-size:14.0px;color:#333;letter-spacing:-0.508px;">Sales</span><span class="t" style="left:648.80px;top:688.00px;font-size:14.31px;color:#333;">1,541</span><span class="t" style="left:704.20px;top:688.00px;font-size:14.0px;color:#333;letter-spacing:-0.286px;">Main</span><span class="t" style="left:871.20px;top:688.00px;font-size:14.0px;color:#333;letter-spacing:-0.008px;">HOMEMATE</span><span class="t" style="left:871.20px;top:709.00px;font-size:14.0px;color:#333;letter-spacing:-0.342px;">INTERIORS</span><span class="t" style="left:871.20px;top:729.00px;font-size:14.16px;color:#333;">HYDERABAD</span><span class="t" style="left:871.20px;top:750.00px;font-size:14.4px;color:#333;letter-spacing:0.410px;">7675066708 C5440</span><span class="t" style="left:1120.30px;top:688.00px;font-size:14.4px;color:#333;letter-spacing:0.159px;">10,183.00</span><span class="t" style="left:1322.90px;top:688.00px;font-size:14.4px;color:#333;letter-spacing:0.228px;">0.00</span><span class="t" style="left:1453.30px;top:688.00px;font-size:14.4px;color:#333;letter-spacing:0.159px;">10,183.00</span><div style="position:absolute;left:28px;top:777px;width:1835px;height:73px;background:#F9F9F9"></div><div style="position:absolute;left:28px;top:777px;width:1835px;height:1px;background:#DDD"></div><span class="t" style="left:38.20px;top:782.00px;font-size:14.4px;color:#333;letter-spacing:0.228px;">12-Jul-2025</span><span class="t" style="left:371.20px;top:782.00px;font-size:14.0px;color:#333;letter-spacing:-0.508px;">Sales</span><span class="t" style="left:648.80px;top:782.00px;font-size:14.31px;color:#333;">1,542</span><span class="t" style="left:704.20px;top:782.00px;font-size:14.0px;color:#333;letter-spacing:-0.286px;">Main</span><span class="t" style="left:871.20px;top:782.00px;font-size:14.0px;color:#333;letter-spacing:-0.058px;">Cash Memo Bal</span><span class="t" style="left:871.20px;top:803.00px;font-size:14.34px;color:#333;">Hyderabad</span><span class="t" style="left:871.20px;top:823.00px;font-size:14.4px;color:#333;letter-spacing:0.397px;">9849290922 C280</span><span class="t" style="left:1128.80px;top:782.00px;font-size:14.4px;color:#333;letter-spacing:0.110px;">6,700.00</span><span class="t" style="left:1322.90px;top:782.00px;font-size:14.4px;color:#333;letter-spacing:0.228px;">0.00</span><span class="t" style="left:1461.80px;top:782.00px;font-size:14.4px;color:#333;letter-spacing:0.110px;">6,700.00</span><span class="t" style="left:1705.20px;top:782.00px;font-size:14.4px;color:#333;letter-spacing:0.024px;">GPAY 6700</span><div style="position:absolute;left:28px;top:850px;width:1835px;height:32px;background:#fff"></div><div style="position:absolute;left:28px;top:850px;width:1835px;height:1px;background:#DDD"></div><span class="t" style="left:38.20px;top:855.00px;font-size:14.4px;color:#333;letter-spacing:0.228px;">12-Jul-2025</span><span class="t" style="left:371.20px;top:855.00px;font-size:14.0px;color:#333;letter-spacing:-0.508px;">Sales</span><span class="t" style="left:648.80px;top:855.00px;font-size:14.31px;color:#333;">1,543</span><span class="t" style="left:704.20px;top:855.00px;font-size:14.0px;color:#333;letter-spacing:-0.286px;">Main</span><span class="t" style="left:871.20px;top:855.00px;font-size:14.0px;color:#333;letter-spacing:-0.629px;">Cash</span><span class="t" style="left:1140.60px;top:855.00px;font-size:14.4px;color:#333;letter-spacing:0.197px;">517.00</span><span class="t" style="left:1322.90px;top:855.00px;font-size:14.4px;color:#333;letter-spacing:0.228px;">0.00</span><span class="t" style="left:1473.60px;top:855.00px;font-size:14.4px;color:#333;letter-spacing:0.197px;">517.00</span><span class="t" style="left:1705.20px;top:855.00px;font-size:14.4px;color:#333;letter-spacing:-0.014px;">CASH 517</span><div style="position:absolute;left:28px;top:882px;width:1835px;height:73px;background:#F9F9F9"></div><div style="position:absolute;left:28px;top:882px;width:1835px;height:1px;background:#DDD"></div><div style="position:absolute;left:28px;top:504px;width:1px;height:386px;background:#DDD"></div><div style="position:absolute;left:194px;top:504px;width:1px;height:386px;background:#DDD"></div><div style="position:absolute;left:361px;top:504px;width:1px;height:386px;background:#DDD"></div><div style="position:absolute;left:528px;top:504px;width:1px;height:386px;background:#DDD"></div><div style="position:absolute;left:694px;top:504px;width:1px;height:386px;background:#DDD"></div><div style="position:absolute;left:861px;top:504px;width:1px;height:386px;background:#DDD"></div><div style="position:absolute;left:1028px;top:504px;width:1px;height:386px;background:#DDD"></div><div style="position:absolute;left:1195px;top:504px;width:1px;height:386px;background:#DDD"></div><div style="position:absolute;left:1361px;top:504px;width:1px;height:386px;background:#DDD"></div><div style="position:absolute;left:1528px;top:504px;width:1px;height:386px;background:#DDD"></div><div style="position:absolute;left:1695px;top:504px;width:1px;height:386px;background:#DDD"></div><div style="position:absolute;left:1862px;top:504px;width:1px;height:386px;background:#DDD"></div><div style="position:absolute;left:1863px;top:504px;width:15px;height:386px;background:#FAFAFA"></div><svg style="left:1866px;top:510px" width="9" height="5" viewBox="0 0 9 5" ><polygon points="0,5 9,5 4.500,0" fill="#9B9B9B"/></svg><div style="position:absolute;left:1866px;top:522px;width:9px;height:322px;background:#8E8E8E;border-radius:4.5px"></div></body></html>
